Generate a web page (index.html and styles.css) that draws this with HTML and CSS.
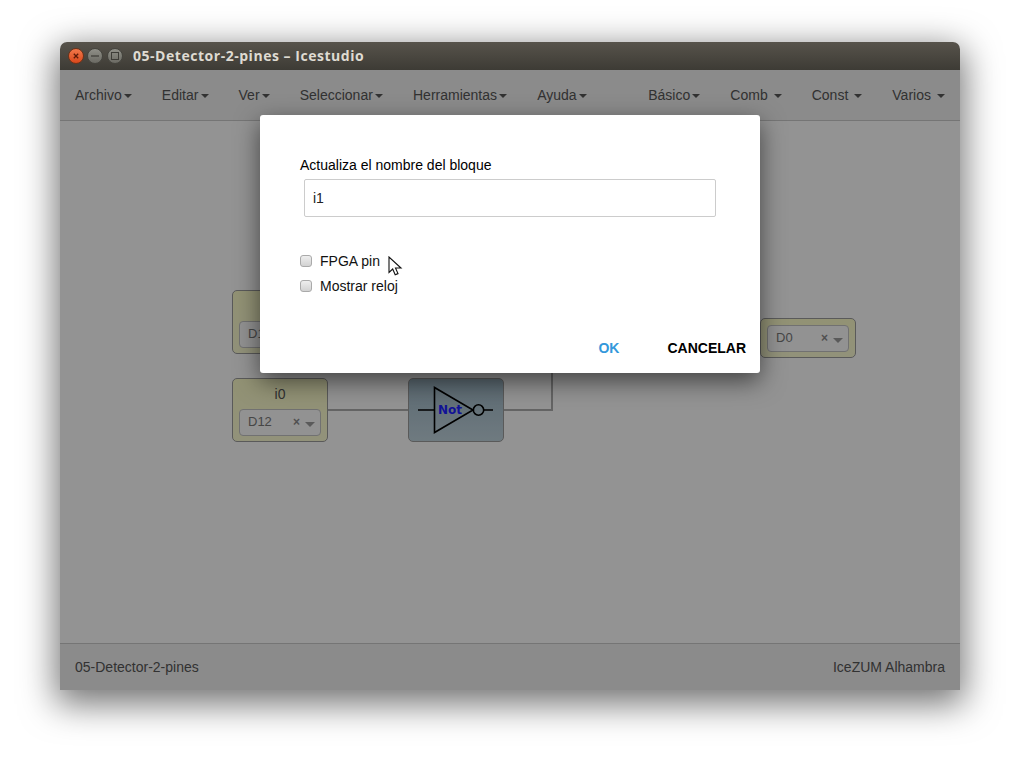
FILE: index.html
```html
<!DOCTYPE html>
<html lang="es">
<head>
<meta charset="utf-8">
<title>05-Detector-2-pines — Icestudio</title>
<link rel="stylesheet" href="styles.css">
</head>
<body>
<div class="window">
  <header class="titlebar">
    <div class="controls">
      <span class="ctl ctl-close"><svg viewBox="0 0 14 14" width="14" height="14"><path d="M4.8 4.8l4.4 4.4M9.2 4.8l-4.4 4.4" stroke="#5c1a08" stroke-width="1.3" fill="none"/></svg></span>
      <span class="ctl"><svg viewBox="0 0 14 14" width="14" height="14"><path d="M3 7h8" stroke="#3d3c37" stroke-width="1.2" fill="none"/></svg></span>
      <span class="ctl"><svg viewBox="0 0 14 14" width="14" height="14"><rect x="3.5" y="3.5" width="7" height="7" stroke="#3d3c37" stroke-width="1" fill="none"/></svg></span>
    </div>
    <div class="wintitle">05-Detector-2-pines – Icestudio</div>
  </header>
  <div class="content">
    <nav class="navbar">
      <ul class="menu">
        <li class="menu-item">Archivo<span class="caret"></span></li>
        <li class="menu-item">Editar<span class="caret"></span></li>
        <li class="menu-item">Ver<span class="caret"></span></li>
        <li class="menu-item">Seleccionar<span class="caret"></span></li>
        <li class="menu-item">Herramientas<span class="caret"></span></li>
        <li class="menu-item">Ayuda<span class="caret"></span></li>
      </ul>
      <ul class="menu">
        <li class="menu-item">Básico<span class="caret"></span></li>
        <li class="menu-item">Comb <span class="caret"></span></li>
        <li class="menu-item">Const <span class="caret"></span></li>
        <li class="menu-item">Varios <span class="caret"></span></li>
      </ul>
    </nav>
    <main class="canvas">
      <svg class="wires" width="900" height="522" viewBox="0 0 900 522">
        <path d="M268 289H348M444 289H492V230" fill="none" stroke="#aaa" stroke-width="2"/>
      </svg>
      <div class="block block-io node-i1">
        <div class="block-label">i1</div>
        <div class="pin-select"><span class="pin-value">D13</span><span class="pin-x">×</span><span class="pin-arrow"></span></div>
      </div>
      <div class="block block-io node-i0">
        <div class="block-label">i0</div>
        <div class="pin-select"><span class="pin-value">D12</span><span class="pin-x">×</span><span class="pin-arrow"></span></div>
      </div>
      <div class="block block-gate node-not">
        <svg class="gate" width="94" height="62" viewBox="0 0 94 62">
          <path d="M9 31H25.5M25.5 8.5V53.5L64 31Z M75 31H84" fill="none" stroke="#000" stroke-width="1.6"/>
          <circle cx="69.5" cy="31" r="5.2" fill="none" stroke="#000" stroke-width="1.6"/>
          <text x="41" y="34.5" text-anchor="middle" class="gate-text">Not</text>
        </svg>
      </div>
      <div class="block block-io block-out node-d0">
        <div class="pin-select"><span class="pin-value">D0</span><span class="pin-x">×</span><span class="pin-arrow"></span></div>
      </div>
    </main>
    <footer class="statusbar">
      <span>05-Detector-2-pines</span>
      <span>IceZUM Alhambra</span>
    </footer>
    <div class="overlay">
      <section class="dialog">
        <label class="field-label">Actualiza el nombre del bloque</label>
        <input class="field-input" type="text" value="i1">
        <div class="checks">
          <label class="check"><span class="checkbox"></span>FPGA pin</label>
          <label class="check"><span class="checkbox"></span>Mostrar reloj</label>
        </div>
        <div class="actions">
          <span class="btn btn-ok">OK</span>
          <span class="btn">CANCELAR</span>
        </div>
      </section>
    </div>
  </div>
</div>
<svg class="cursor" width="15" height="21" viewBox="0 0 15 21">
  <path d="M1 1V16.4L4.7 13L7.2 18.8L10 17.6L7.5 12H13Z" fill="#fff" stroke="#111" stroke-width="1.1"/>
</svg>
</body>
</html>
```

FILE: styles.css
```css
* { box-sizing: border-box; }
html, body { margin: 0; height: 100%; }
body {
  background: #fff;
  padding: 42px 56px 0 60px;
  overflow: hidden;
  font-family: "Liberation Sans", Arial, sans-serif;
  font-size: 14px;
  color: #555;
}
.window {
  width: 900px;
  height: 648px;
  display: flex;
  flex-direction: column;
  border-radius: 7px 7px 0 0;
  box-shadow: 0 10px 35px 4px rgba(0, 0, 0, .55);
}
.titlebar {
  height: 28px;
  flex: none;
  display: flex;
  align-items: center;
  padding-left: 7.5px;
  border-radius: 7px 7px 0 0;
  background: linear-gradient(#57534b, #3d3b35);
}
.controls { display: flex; gap: 3.5px; }
.ctl {
  width: 16px;
  height: 16px;
  border-radius: 50%;
  display: flex;
  align-items: center;
  justify-content: center;
  background: linear-gradient(#8f8f87, #6b6a63);
  border: 1px solid #45443e;
}
.ctl-close { background: linear-gradient(#f2784a, #d9481c); border-color: #6d3219; }
.wintitle {
  margin-left: 10.5px;
  padding-bottom: 2px;
  font-family: "Open Sans", "DejaVu Sans", sans-serif;
  font-weight: 700;
  font-size: 14px;
  letter-spacing: .53px;
  color: #dfdbd2;
}
.content { position: relative; flex: 1; display: flex; flex-direction: column; min-height: 0; }
.navbar {
  height: 51px;
  flex: none;
  display: flex;
  justify-content: space-between;
  background: #ececec;
  border-bottom: 1px solid #c8c8c8;
}
.menu { list-style: none; margin: 0; padding: 0; display: flex; }
.menu-item { padding: 15px; line-height: 20px; white-space: pre; }
.caret {
  display: inline-block;
  width: 0;
  height: 0;
  margin-left: 2.15px;
  vertical-align: middle;
  border-top: 4px solid #555;
  border-left: 4px solid transparent;
  border-right: 4px solid transparent;
}
.canvas { position: relative; flex: 1; background: #fafafa; overflow: hidden; }
.wires { position: absolute; left: 0; top: 0; }
.block { position: absolute; width: 96px; border: 1px solid #999; border-radius: 5px; }
.block-io { background: linear-gradient(#f9f8c6, #f9f9d0); height: 64px; }
.block-out { height: 40px; padding-top: 6px; }
.block-gate { height: 64px; background: linear-gradient(#9cb4c2, #bdd0da); }
.node-i1 { left: 172px; top: 169px; }
.node-i0 { left: 172px; top: 257px; }
.node-not { left: 348px; top: 257px; }
.node-d0 { left: 700px; top: 197px; }
.block-label { text-align: center; font-size: 14px; line-height: 16px; margin-top: 7px; color: #555; }
.pin-select {
  display: flex;
  align-items: center;
  margin: 7px 6px 0;
  height: 27px;
  padding: 0 5px 2px 8px;
  border: 1px solid #c0c0c0;
  border-radius: 4px;
  background: #f8f8f8;
  color: #777;
  font-size: 13px;
}
.block-out .pin-select { margin-top: 0; }
.pin-value { flex: 1; }
.pin-x { font-weight: 700; font-size: 12px; color: #888; margin-right: 5px; }
.pin-arrow {
  width: 0;
  height: 0;
  margin-top: 5px;
  border-top: 5px solid #999;
  border-left: 5px solid transparent;
  border-right: 5px solid transparent;
}
.gate { display: block; }
.gate-text { font-family: "DejaVu Sans", sans-serif; font-weight: 700; font-size: 12px; fill: #2020ff; }
.statusbar {
  height: 47px;
  flex: none;
  display: flex;
  justify-content: space-between;
  align-items: center;
  padding: 0 15px;
  background: #ececec;
  border-top: 1px solid #c8c8c8;
}
.overlay {
  position: absolute;
  inset: 0;
  display: flex;
  justify-content: center;
  align-items: flex-start;
  padding-top: 45px;
  background: rgba(0, 0, 0, .41);
}
.dialog {
  width: 500px;
  height: 258px;
  padding: 42px 14px 0 40px;
  background: #fff;
  border-radius: 3px;
  color: #000;
  box-shadow: 0 8px 24px rgba(0, 0, 0, .55);
  display: flex;
  flex-direction: column;
}
.field-label { line-height: 16px; }
.field-input {
  display: block;
  width: 412px;
  height: 38px;
  margin: 6px 0 0 4px;
  padding: 0 8px;
  border: 1px solid #ccc;
  border-radius: 2px;
  font: 14px "Liberation Sans", Arial, sans-serif;
  color: #222;
  outline: none;
}
.checks { margin-top: 34px; display: flex; flex-direction: column; gap: 5px; }
.check { display: flex; align-items: center; line-height: 20px; color: #111; }
.checkbox {
  width: 12px;
  height: 12px;
  margin-right: 8px;
  border: 1px solid #aaa;
  border-radius: 3px;
  background: linear-gradient(#eee, #d2d2d2);
}
.actions { margin-top: 44px; display: flex; justify-content: flex-end; gap: 48px; }
.btn { font-weight: 700; line-height: 16px; color: #000; }
.btn-ok { color: #3498db; }
.cursor { position: absolute; left: 388px; top: 256px; }
```
